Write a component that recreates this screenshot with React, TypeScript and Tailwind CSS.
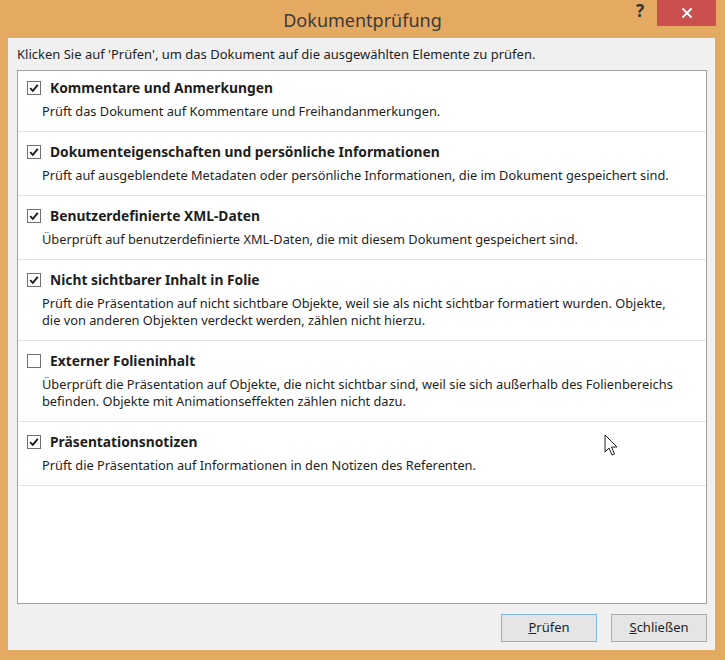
import React from "react";

const items = [
  {
    title: "Kommentare und Anmerkungen",
    desc: ["Prüft das Dokument auf Kommentare und Freihandanmerkungen."],
    checked: true,
  },
  {
    title: "Dokumenteigenschaften und persönliche Informationen",
    desc: ["Prüft auf ausgeblendete Metadaten oder persönliche Informationen, die im Dokument gespeichert sind."],
    checked: true,
  },
  {
    title: "Benutzerdefinierte XML-Daten",
    desc: ["Überprüft auf benutzerdefinierte XML-Daten, die mit diesem Dokument gespeichert sind."],
    checked: true,
  },
  {
    title: "Nicht sichtbarer Inhalt in Folie",
    desc: [
      "Prüft die Präsentation auf nicht sichtbare Objekte, weil sie als nicht sichtbar formatiert wurden. Objekte,",
      "die von anderen Objekten verdeckt werden, zählen nicht hierzu.",
    ],
    checked: true,
  },
  {
    title: "Externer Folieninhalt",
    desc: [
      "Überprüft die Präsentation auf Objekte, die nicht sichtbar sind, weil sie sich außerhalb des Folienbereichs",
      "befinden. Objekte mit Animationseffekten zählen nicht dazu.",
    ],
    checked: false,
  },
  {
    title: "Präsentationsnotizen",
    desc: ["Prüft die Präsentation auf Informationen in den Notizen des Referenten."],
    checked: true,
  },
];

function Checkbox({ checked }: { checked: boolean }) {
  return (
    <div className="w-[14px] h-[14px] border border-[#707070] bg-white flex items-center justify-center shrink-0">
      {checked && (
        <svg width="10" height="10" viewBox="0 0 10 10">
          <path d="M1.2 5.2 L3.8 7.8 L8.8 1.8" fill="none" stroke="#1a1a1a" strokeWidth="1.9" />
        </svg>
      )}
    </div>
  );
}

export default function App() {
  return (
    <div
      className="w-[725px] h-[660px] bg-[#e5aa62] flex flex-col text-[#1e1e1e] relative"
      style={{ fontFamily: '"Noto Sans", "Open Sans", sans-serif' }}
    >
      {/* title bar */}
      <div className="h-[38px] flex items-start relative">
        <div className="absolute left-0 right-0 top-[7px] text-center text-[18px] leading-[26px] text-[#3a3a3a]">
          Dokumentprüfung
        </div>
        <div className="ml-auto flex items-start mr-[9px]">
          <div className="w-[26px] h-[26px] flex items-center justify-center text-[17px] font-bold text-[#333] mr-[4px] mt-[-2px]">
            ?
          </div>
          <div className="w-[59px] h-[26px] bg-[#c9504f] flex items-center justify-center">
            <svg width="12" height="12" viewBox="0 0 12 12">
              <path d="M1.5 1.5 L10.5 10.5 M10.5 1.5 L1.5 10.5" stroke="#fff" strokeWidth="1.8" />
            </svg>
          </div>
        </div>
      </div>

      {/* client area */}
      <div className="mx-[8px] mr-[10px] h-[612px] bg-[#f0f0f0] flex flex-col px-[9px] pr-[8px]">
        <div className="h-[32px] flex items-center text-[13px] pt-[2px]">
          Klicken Sie auf 'Prüfen', um das Dokument auf die ausgewählten Elemente zu prüfen.
        </div>

        <div className="h-[534px] bg-white border border-[#a0a0a0] flex flex-col">
          {items.map((it, i) => (
            <div
              key={it.title}
              className={`border-b border-[#e3e3e3] px-[9px] pb-[11px] ${i === 0 ? "pt-[8px]" : "pt-[11px]"}`}
            >
              <div className="flex items-center h-[18px] gap-[9px]">
                <Checkbox checked={it.checked} />
                <span className="font-bold text-[13.8px]">{it.title}</span>
              </div>
              <div className="mt-[6px] pl-[15px] text-[12.8px] leading-[17px]">
                {it.desc.map((d) => (
                  <div key={d}>{d}</div>
                ))}
              </div>
            </div>
          ))}
        </div>

        <div className="flex justify-end gap-[14px] mt-[10px]">
          <button className="w-[96px] h-[28px] border border-[#7eb4ea] bg-[#e5e5e5] text-[13px]">
            <span className="underline">P</span>rüfen
          </button>
          <button className="w-[96px] h-[28px] border border-[#adadad] bg-[#e5e5e5] text-[13px]">
            <span className="underline">S</span>chließen
          </button>
        </div>
      </div>

      {/* mouse pointer */}
      <svg className="absolute left-[604px] top-[434px]" width="14" height="24" viewBox="0 0 14 24">
        <path d="M1 1 L1 18 L5 14 L8 21 L10.5 20 L7.5 13 L13 13 Z" fill="#fff" stroke="#222" strokeWidth="1" />
      </svg>
    </div>
  );
}
